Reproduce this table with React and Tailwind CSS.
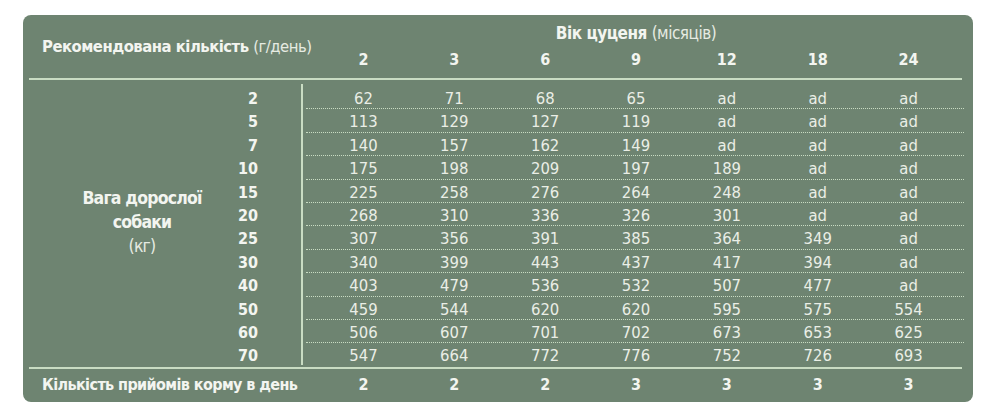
import React from 'react';

const ages = ['2', '3', '6', '9', '12', '18', '24'];

const rows = [
  ['2', ['62', '71', '68', '65', 'ad', 'ad', 'ad']],
  ['5', ['113', '129', '127', '119', 'ad', 'ad', 'ad']],
  ['7', ['140', '157', '162', '149', 'ad', 'ad', 'ad']],
  ['10', ['175', '198', '209', '197', '189', 'ad', 'ad']],
  ['15', ['225', '258', '276', '264', '248', 'ad', 'ad']],
  ['20', ['268', '310', '336', '326', '301', 'ad', 'ad']],
  ['25', ['307', '356', '391', '385', '364', '349', 'ad']],
  ['30', ['340', '399', '443', '437', '417', '394', 'ad']],
  ['40', ['403', '479', '536', '532', '507', '477', 'ad']],
  ['50', ['459', '544', '620', '620', '595', '575', '554']],
  ['60', ['506', '607', '701', '702', '673', '653', '625']],
  ['70', ['547', '664', '772', '776', '752', '726', '693']],
];

const meals = ['2', '2', '2', '3', '3', '3', '3'];

const font = "font-['DejaVu_Sans_Condensed','Liberation_Sans_Narrow',Roboto,sans-serif]";

function App() {
  return (
    <div className={`min-h-[418px] bg-white pt-[15px] pl-[23px] ${font}`}>
      <div className="w-[950px] h-[387px] rounded-[8px] bg-[#6e8471] text-[#f3f5f0] overflow-hidden">
        {/* Header */}
        <div className="flex h-[63px]">
          <div className="w-[278px] pl-[19px] flex items-center pt-[2px]">
            <span className="text-[16.5px] tracking-[-0.5px] font-bold whitespace-nowrap">
              Рекомендована кількість <span className="font-normal text-[#e6ebe2]">(г/день)</span>
            </span>
          </div>
          <div className="flex-1 flex flex-col pl-[17px]">
            <div className="w-[636px] text-center text-[17px] tracking-[-0.5px] font-bold leading-none pt-[10px]">
              Вік цуценя <span className="font-normal text-[#e6ebe2]">(місяців)</span>
            </div>
            <div className="grid grid-cols-7 w-[636px] mt-[10px] text-[16px] font-bold leading-none">
              {ages.map((a) => (
                <div key={a} className="text-center">{a}</div>
              ))}
            </div>
          </div>
        </div>
        <div className="ml-[6px] mr-[11px] h-[2px] bg-[#c9dcc3]" />

        {/* Body */}
        <div className="flex pt-[6px]">
          <div className="w-[200px] pl-[38px] flex flex-col items-center justify-center pb-[8px] text-[17.5px] tracking-[-0.8px] leading-[24px]">
            <span className="font-bold">Вага дорослої</span>
            <span className="font-bold">собаки</span>
            <span className="text-[#e6ebe2]">(кг)</span>
          </div>
          <div className="w-[35px] flex flex-col text-right text-[16px] font-bold">
            {rows.map(([w]) => (
              <div key={w} className="h-[23.4px] leading-[25px]">{w}</div>
            ))}
          </div>
          <div className="w-[43px]" />
          <div className="w-[1.5px] bg-[#c9dcc3] my-[-2px] mb-[2px]" />
          <div className="ml-[3px] w-[658px] flex flex-col text-[16.5px] text-[#eaeee6]">
            {rows.map(([w, vals], i) => (
              <div
                key={w}
                className={`h-[23.4px] pl-[12.5px] ${i < rows.length - 1 ? 'border-b border-dotted border-[#c9dcc3]' : ''}`}
              >
                <div className="grid grid-cols-7 w-[636px] leading-[25px]">
                  {vals.map((v, j) => (
                    <div key={j} className="text-center">{v}</div>
                  ))}
                </div>
              </div>
            ))}
          </div>
        </div>
        <div className="ml-[6px] mr-[11px] h-[2px] bg-[#c9dcc3]" />

        {/* Footer */}
        <div className="flex h-[33px] items-center">
          <div className="w-[278px] pl-[19px] text-[16px] tracking-[-0.6px] font-bold whitespace-nowrap">
            Кількість прийомів корму в день
          </div>
          <div className="pl-[17px]">
            <div className="grid grid-cols-7 w-[636px] text-[16px] font-bold">
              {meals.map((m, j) => (
                <div key={j} className="text-center">{m}</div>
              ))}
            </div>
          </div>
        </div>
      </div>
    </div>
  );
}

export default App;
